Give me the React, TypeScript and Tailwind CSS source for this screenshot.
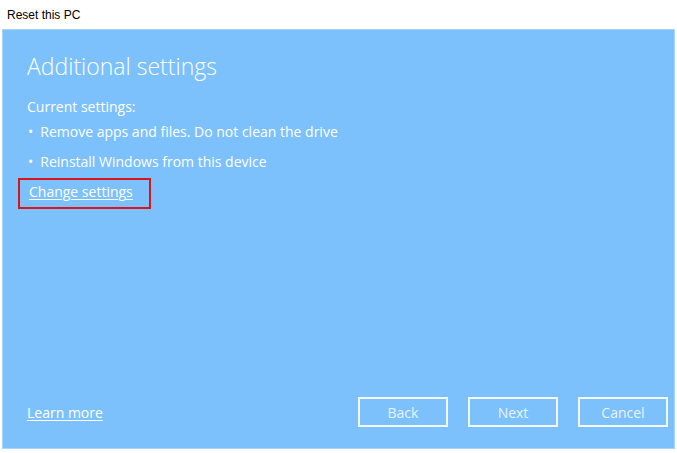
export default function App() {
  return (
    <div
      className="w-[677px] h-[453px] bg-white flex flex-col text-white"
      style={{ fontFamily: '"Open Sans", "Noto Sans", sans-serif' }}
    >
      <div className="h-[29px] flex items-center pl-[7px] text-[12px] text-black" style={{ fontFamily: '"Liberation Sans", Arial, sans-serif' }}>
        Reset this PC
      </div>
      <div className="mx-[2px] mb-[4px] flex-1 bg-[#7cc1fc] border border-[#a9d5fb] flex flex-col px-[24px]">
        <h1 className="mt-[20px] text-[23px] font-light leading-[32px]">Additional settings</h1>
        <div className="mt-[15px] text-[14px] leading-[20px]">Current settings:</div>
        <ul className="text-[14px] leading-[20px]">
          <li className="mt-[5px] flex gap-[7px] pl-[1px]"><span>•</span>Remove apps and files. Do not clean the drive</li>
          <li className="mt-[10px] flex gap-[7px] pl-[1px]"><span>•</span>Reinstall Windows from this device</li>
        </ul>
        <div className="mt-[6px] -ml-[9px] w-[133px] h-[31px] border-2 border-[#d9141c] flex items-center pl-[9px] pb-[4px]">
          <span className="text-[14px] underline underline-offset-2">Change settings</span>
        </div>
        <div className="flex-1" />
        <div className="flex items-center mb-[21px]">
          <span className="text-[14px] underline underline-offset-2">Learn more</span>
          <div className="flex-1" />
          <div className="flex gap-[20px] -mr-[18px]">
            <button className="w-[90px] h-[30px] border-2 border-[#f1f8ff] text-[14px] text-[#e8f3ff]">Back</button>
            <button className="w-[90px] h-[30px] border-2 border-[#f1f8ff] text-[14px] text-[#e8f3ff]">Next</button>
            <button className="w-[90px] h-[30px] border-2 border-[#f1f8ff] text-[14px] text-[#e8f3ff]">Cancel</button>
          </div>
        </div>
      </div>
    </div>
  )
}
